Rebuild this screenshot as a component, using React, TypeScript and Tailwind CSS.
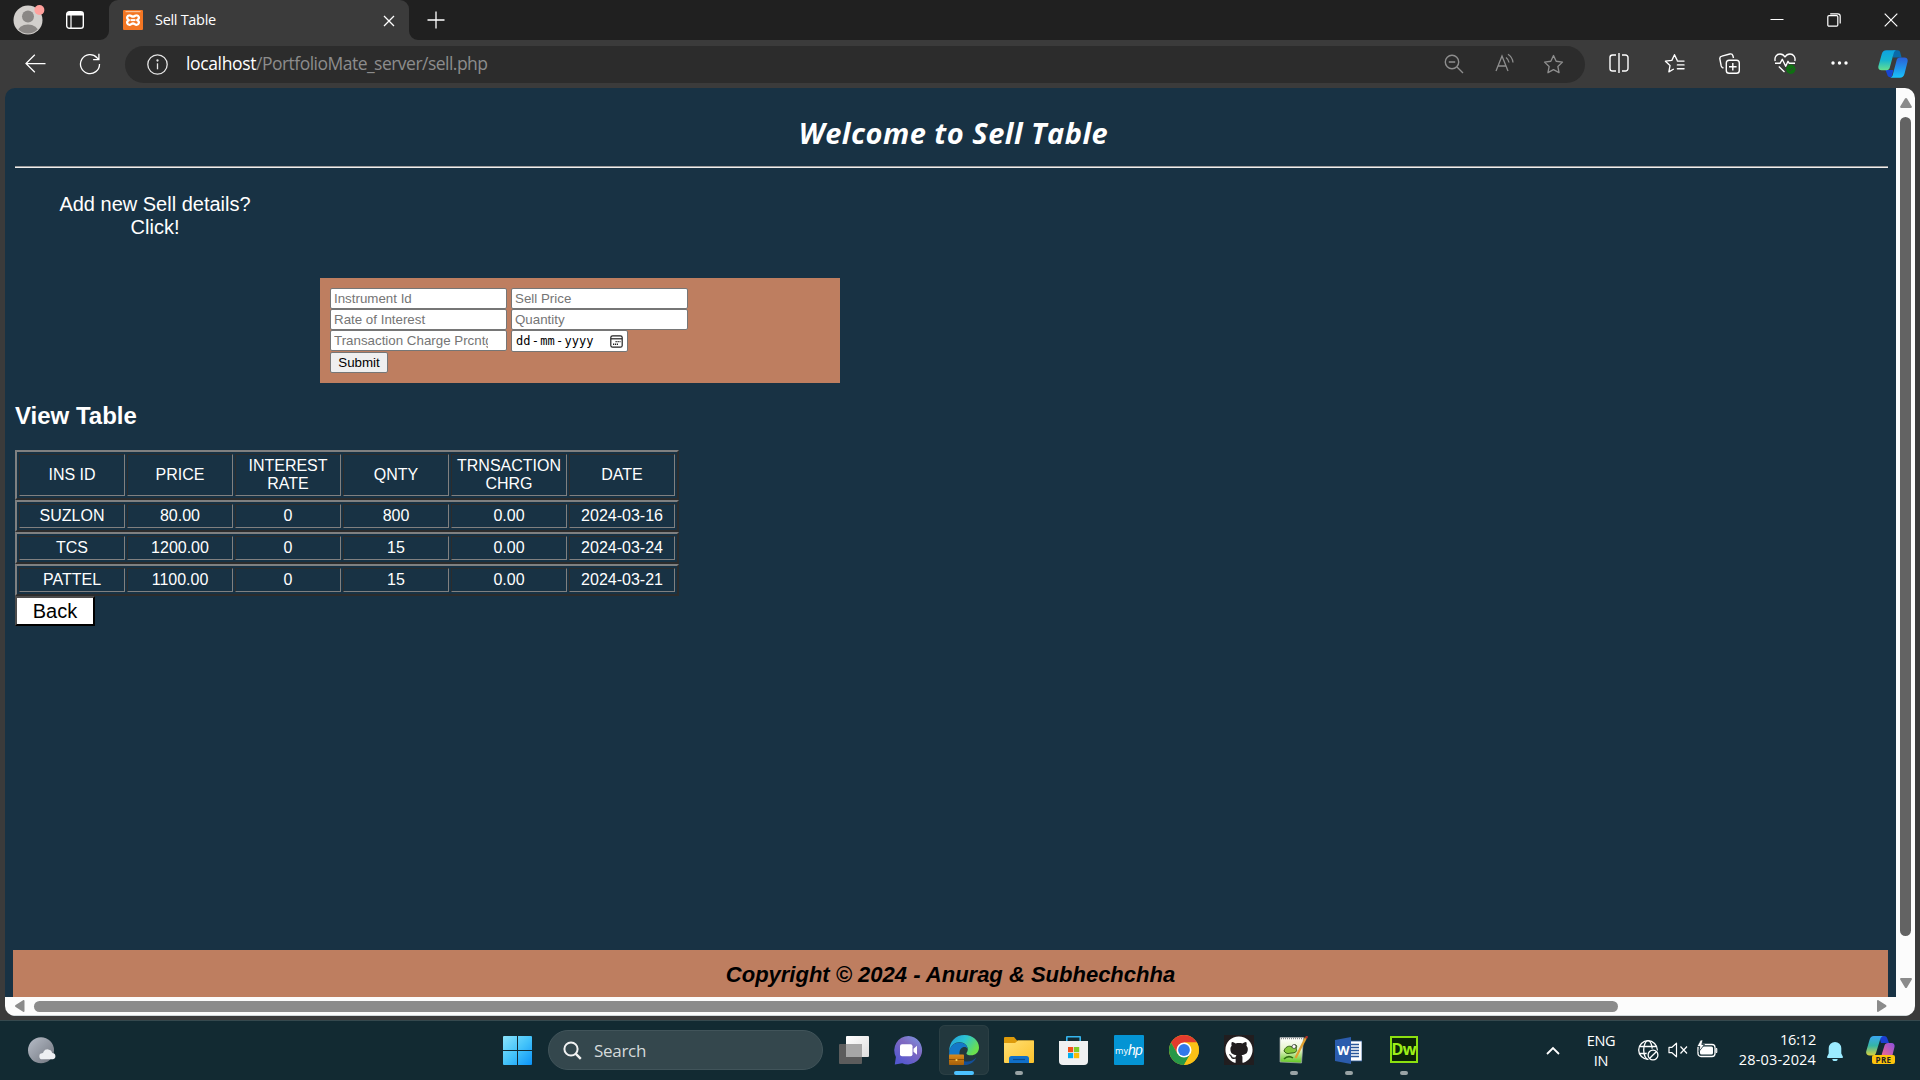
import React from "react";
import { FaGithub } from "react-icons/fa";

type P = { className?: string };

const XamppIcon = () => (
  <svg viewBox="0 0 20 20" className="h-5 w-5">
    <rect width="20" height="20" rx="1" fill="#f37623" />
    <rect x="2.500" y="1" width="15" height="1.200" fill="#f9c29a" />
    <path
      d="M6.500 5.300a2.300 2.300 0 0 0-1 4.400c.5.200.5.600 0 .8a2.300 2.300 0 0 0 1 4.400c1.700 0 1.900-1.400 3.500-1.400s1.800 1.400 3.500 1.400a2.300 2.300 0 0 0 1-4.400c-.5-.2-.5-.6 0-.8a2.300 2.300 0 0 0-1-4.400c-1.700 0-1.900 1.400-3.500 1.400s-1.800-1.400-3.500-1.400z"
      fill="none"
      stroke="#fff"
      strokeWidth="2.300"
    />
    <path d="M7.500 10.100h5" stroke="#fff" strokeWidth="2" />
  </svg>
);

function TabBar() {
  return (
    <div className="flex h-10 bg-[#202020]">
      <div className="relative flex w-[109px] shrink-0 items-center">
        <svg viewBox="0 0 32 32" className="ml-[13px] mt-[-1px] h-8 w-8">
          <circle cx="15" cy="16" r="14.5" fill="#d2cfcc" />
          <clipPath id="av"><circle cx="15" cy="16" r="13.6" /></clipPath>
          <g clipPath="url(#av)" fill="#8a8785">
            <circle cx="15" cy="12.5" r="6" />
            <ellipse cx="15" cy="28" rx="10.5" ry="7.5" />
          </g>
          <circle cx="26.4" cy="6" r="5" fill="#ffa09c" />
        </svg>
        <svg viewBox="0 0 18 18" className="ml-[21px] h-[18px] w-[18px]">
          <rect x=".7" y=".7" width="16.6" height="16.6" rx="2.6" fill="none" stroke="#fff" strokeWidth="1.4" />
          <path d="M1 4.6V3a2 2 0 0 1 2-2h12a2 2 0 0 1 2 2v1.6z" fill="#fff" />
          <path d="M5 4v13" stroke="#fff" strokeWidth="1.2" />
        </svg>
      </div>
      <div className="relative flex h-10 w-[300px] shrink-0 items-center rounded-t-[9px] bg-[#3b3b3b] pl-[14px] pr-[14px]">
        <XamppIcon />
        <span className="ml-3 flex-1 text-[14.5px] tracking-[-0.3px] text-white">Sell Table</span>
        <svg viewBox="0 0 12 12" className="mt-px h-3 w-3"><path d="M1 1l10 10M11 1L1 11" stroke="#fff" strokeWidth="1.3" /></svg>
        <svg viewBox="0 0 9 9" className="absolute -left-[9px] bottom-0 h-[9px] w-[9px]"><path d="M9 0v9H0A9 9 0 0 0 9 0z" fill="#3b3b3b" /></svg>
        <svg viewBox="0 0 9 9" className="absolute -right-[9px] bottom-0 h-[9px] w-[9px]"><path d="M0 0v9h9A9 9 0 0 1 0 0z" fill="#3b3b3b" /></svg>
      </div>
      <svg viewBox="0 0 18 18" className="ml-[18px] mt-[10.5px] h-[18px] w-[18px]"><path d="M9 .5v17M.5 9h17" stroke="#fff" strokeWidth="1.3" /></svg>
      <div className="ml-auto flex items-center pr-[22px]">
        <svg viewBox="0 0 14 14" className="h-3.5 w-3.5"><path d="M.5 6.500h13" stroke="#fff" strokeWidth="1" /></svg>
        <svg viewBox="0 0 14 14" className="ml-[43px] h-3.5 w-3.5" fill="none" stroke="#fff" strokeWidth="1.2">
          <rect x=".8" y="2.600" width="10" height="10.600" rx="1.2" />
          <path d="M3.2 .8h7.6a2.4 2.4 0 0 1 2.4 2.4v7.4" />
        </svg>
        <svg viewBox="0 0 14 14" className="ml-[43px] h-3.5 w-3.5"><path d="M.7 .7l12.6 12.6M13.3 .7L.7 13.3" stroke="#fff" strokeWidth="1.2" /></svg>
      </div>
    </div>
  );
}

const Slot = ({ children, className = "" }: { children: React.ReactNode; className?: string }) => (
  <div className={"flex h-full shrink-0 items-center justify-center " + className}>{children}</div>
);

const starPath = "M11 1.6l2.8 6 6.6.9-4.8 4.6 1.2 6.5-5.8-3.2-5.8 3.2 1.2-6.5L1.6 8.5l6.6-.9z";

function Copilot({ className }: P) {
  return (
    <svg viewBox="0 0 30 28" className={className}>
      <defs>
        <linearGradient id="c1" x1="0" y1="0" x2="0" y2="1"><stop offset="0" stopColor="#0ea2e0" /><stop offset=".5" stopColor="#17b5cf" /><stop offset="1" stopColor="#66e08f" /></linearGradient>
        <linearGradient id="c2" x1="0" y1="0" x2="0" y2="1"><stop offset="0" stopColor="#2a5fd8" /><stop offset="1" stopColor="#19c2fb" /></linearGradient>
      </defs>
      <path d="M15 .3h4.5c1.600 0 2.300.8 2.800 2.400L23.600 7.500H15z" fill="#0a6aa8" />
      <path d="M7.500 20h8l-2 7.300h-1.200c-1.700 0-2.600-1-3.100-2.800z" fill="#1746d1" />
      <path d="M8.500 .3h10c-1.500.3-2.300 1.300-2.800 3L11.800 17.500c-.5 1.800-1.500 2.700-3.300 2.700H3.600C1 20.200-.2 18.500.5 15.800L3.700 4.300C4.400 1.600 5.900.3 8.500.3z" fill="url(#c1)" />
      <path d="M21.800 27.700H12c1.500-.3 2.300-1.300 2.800-3l3.800-14.500c.5-1.800 1.500-2.700 3.300-2.700h4.500c2.600 0 3.800 1.800 3.100 4.500l-3 11.700c-.7 2.700-2.100 4-4.700 4z" fill="url(#c2)" />
    </svg>
  );
}

function Toolbar() {
  return (
    <div className="flex h-12 items-center bg-[#3b3b3b] pb-[2px]">
      <svg viewBox="0 0 21 19" className="ml-[24.5px] h-[19px] w-[21px] shrink-0" fill="none" stroke="#fff" strokeWidth="1.25"><path d="M20.500 9.500H1M9.800 .8L1 9.500l8.800 8.700" /></svg>
      <svg viewBox="0 0 22 22" className="ml-[33.5px] mt-px h-[22px] w-[22px] shrink-0" fill="none" stroke="#fff" strokeWidth="1.3"><path d="M20.500 11A9.500 9.500 0 1 1 18 4.700L19.800 6.500M19.900 .8v5.800h-5.800" /></svg>
      <div className="ml-[24px] mt-[2px] flex h-[37px] w-[1460px] shrink-0 items-center rounded-full bg-[#2c2c2c] pl-[22px]">
        <svg viewBox="0 0 21 21" className="h-[21px] w-[21px]" fill="none" stroke="#e6e6e6" strokeWidth="1.3"><circle cx="10.500" cy="10.500" r="9.700" /><path d="M10.500 9.300v6" /><circle cx="10.500" cy="6.500" r=".6" fill="#e6e6e6" stroke="none" /><circle cx="10.500" cy="6.500" r=".5" /></svg>
        <span className="ml-[18px] mt-[-2px] flex-1 whitespace-nowrap text-[17.5px] tracking-[-0.52px] text-[#8c8c8c]"><span className="tracking-[-0.36px] text-white">localhost</span>/PortfolioMate_server/sell.php</span>
        <Slot className="w-[50px]"><svg viewBox="0 0 20 20" className="ml-[2px] h-5 w-5" fill="none" stroke="#8e8e8e" strokeWidth="1.400"><circle cx="8" cy="8" r="6.700" /><path d="M13 13l6 6M4.800 8h6.400" /></svg></Slot>
        <Slot className="w-[50px]"><svg viewBox="0 0 20 20" className="mb-[2px] ml-[4px] h-5 w-5" fill="none" stroke="#8e8e8e" strokeWidth="1.300"><path d="M1 18L7 3l6 15M3 13h8M11 4.500a8 8 0 0 1 3 5M13 1.200a11 11 0 0 1 5 8.300" /></svg></Slot>
        <Slot className="mr-[7px] w-[50px]"><svg viewBox="0 0 22 22" className="h-[21px] w-[21px]" fill="none" stroke="#8e8e8e" strokeWidth="1.400" strokeLinejoin="round"><path d={starPath} /></svg></Slot>
      </div>
      <Slot className="ml-[7px] w-[54px]">
        <svg viewBox="0 0 20 20" className="h-5 w-5" fill="none" stroke="#fff" strokeWidth="1.400"><path d="M7 2H3.600A2.600 2.600 0 0 0 1 4.600v10.800A2.600 2.600 0 0 0 3.600 18H7M13 2h3.400A2.600 2.600 0 0 1 19 4.600v10.800a2.600 2.600 0 0 1-2.600 2.600H13M10 0v20" /></svg>
      </Slot>
      <Slot className="w-[56px]">
        <svg viewBox="0 0 22 22" className="h-[21px] w-[21px]" fill="none" stroke="#fff" strokeWidth="1.400" strokeLinejoin="round" strokeLinecap="round"><path d="M13.700 7.500L11 1.800 8.200 7.700 1.500 8.600l4.800 4.600-1.200 6.500 4.700-2.700M14 8.500h7M14 12.500h7M14 16.500h7" /></svg>
      </Slot>
      <Slot className="w-[55px]">
        <svg viewBox="0 0 21 21" className="h-[21px] w-[21px]" fill="none" stroke="#fff" strokeWidth="1.400"><rect x="7.300" y="7.300" width="13" height="13" rx="2.800" /><path d="M13.800 10v7.600M10 13.800h7.600M4.500 15l-1-.4a2.600 2.600 0 0 1-1.300-1.700L.9 6.100a2.600 2.600 0 0 1 2-3L10.800 1a2.600 2.600 0 0 1 3.100 1.800l.6 2.200" /></svg>
      </Slot>
      <Slot className="w-[55px]">
        <svg viewBox="0 0 22 22" className="h-[22px] w-[22px]" fill="none" stroke="#fff" strokeWidth="1.400" strokeLinejoin="round">
          <path d="M1.200 9C.2 5.500 2.500 2 6 2c2.300 0 4 1.300 5 3 1-1.700 2.700-3 5-3 3.500 0 5.800 3.500 4.800 7M1 11.300h5l2.300-4 3.400 7 2.300-5 1.300 2H21M4.800 14.500l5.700 5.400" />
          <circle cx="16.800" cy="17.200" r="4.700" fill="#0f7012" stroke="none" /><path d="M14.600 17.300l1.500 1.500 2.900-2.900" stroke="#3b3b3b" strokeWidth="1" />
        </svg>
      </Slot>
      <Slot className="w-[55px]">
        <svg viewBox="0 0 17 4" className="h-1 w-[17px]" fill="#fff"><circle cx="2" cy="2" r="1.700" /><circle cx="8.500" cy="2" r="1.700" /><circle cx="15" cy="2" r="1.700" /></svg>
      </Slot>
      <Slot className="w-[51px]"><Copilot className="mt-[1px] h-7 w-[30px]" /></Slot>
    </div>
  );
}

const Field = ({ text }: { text: string }) => (
  <div className="h-[21px] w-[176.5px] rounded-[2px] border border-[#767676] bg-white px-[3px]">
    <div className="w-[154px] overflow-hidden whitespace-nowrap text-[13.333px] leading-[19px] text-[#757575]">{text}</div>
  </div>
);

function SellForm() {
  return (
    <form className="ml-[315px] mt-[39px] h-[105px] w-[520px] bg-[#be7e60] pl-[10px] pt-[10px]">
      <div className="grid w-max grid-cols-[177px_177px] gap-x-[4px]">
        <Field text="Instrument Id" />
        <Field text="Sell Price" />
        <Field text="Rate of Interest" />
        <Field text="Quantity" />
        <Field text="Transaction Charge Prcntge" />
        <div className="flex h-[22px] w-[117px] items-center justify-between rounded-[2px] border border-[#767676] bg-white pl-[4px] pr-[4px]">
          <span className="whitespace-pre text-[12px] text-black [font-family:'DejaVu_Sans_Mono',monospace]"><span>dd</span><span className="mx-[1.3px]">-</span><span>mm</span><span className="mx-[1.3px]">-</span><span>yyyy</span></span>
          <svg viewBox="0 0 13 13" className="h-[13px] w-[13px]" fill="none" stroke="#222" strokeWidth="1.200"><rect x=".8" y=".8" width="11.400" height="11.400" rx="1.800" /><path d="M1 3.800h11" /><path d="M5.500 6.600h5M3 9.200h5" strokeWidth="1.400" strokeDasharray="1.300 .7" /></svg>
        </div>
      </div>
      <button type="button" className="block h-[21px] w-[58px] rounded-[2px] border border-[#767676] bg-[#efefef] text-center text-[13.333px] leading-[19px] text-black">Submit</button>
    </form>
  );
}

const rows: string[][] = [
  ["INS ID", "PRICE", "INTEREST RATE", "QNTY", "TRNSACTION CHRG", "DATE"],
  ["SUZLON", "80.00", "0", "800", "0.00", "2024-03-16"],
  ["TCS", "1200.00", "0", "15", "0.00", "2024-03-24"],
  ["PATTEL", "1100.00", "0", "15", "0.00", "2024-03-21"],
];

function SellTable() {
  return (
    <div className="flex flex-col">
      {rows.map((r, i) => (
        <div
          key={i}
          className={
            "grid w-[664px] grid-cols-[106px_106px_106px_106px_116px_106px] gap-[2px] border-2 border-b-[#2c2c2c] border-l-[#808080] border-r-[#2c2c2c] border-t-[#808080] p-[2px] " +
            (i === 0 ? "h-[50px]" : "h-8")
          }
        >
          {r.map((c, j) => (
            <div
              key={j}
              className="flex items-center justify-center border border-b-[#808080] border-l-[#2c2c2c] border-r-[#808080] border-t-[#2c2c2c] text-center text-[16px] leading-[18px] text-white"
            >
              {c}
            </div>
          ))}
        </div>
      ))}
    </div>
  );
}

function Page() {
  return (
    <div className="flex h-[909px] w-[1891px] flex-col bg-[#183244] text-white [font-family:'Liberation_Sans',Arial,sans-serif]">
      <h1 className="ml-[12px] mt-[21px] h-[47px] w-[1873px] text-center text-[29px] font-bold italic leading-[47px] tracking-[0.5px] [font-family:'Open_Sans',sans-serif]">Welcome to Sell Table</h1>
      <div className="ml-[10px] mt-[10px] h-[2px] w-[1873px] border-b border-t border-b-[#eeeeee] border-t-[#9a9a9a]" />
      <p className="ml-[50px] mt-[25px] w-[200px] text-center text-[20px] leading-[23px]">Add new Sell details?<br />Click!</p>
      <SellForm />
      <h2 className="ml-[10px] mt-[19px] text-[24px] font-bold leading-[28px]">View Table</h2>
      <div className="ml-[10px] mt-[20px]">
        <SellTable />
        <button type="button" className="block h-[30px] w-[80px] border-2 border-b-black border-l-[#4c4c4c] border-r-black border-t-[#4c4c4c] bg-white text-center text-[20px] leading-[26px] text-black">Back</button>
      </div>
      <footer className="ml-2 mt-auto h-[47px] w-[1875px] bg-[#be7e60] text-center text-[22px] font-bold italic leading-[49px] text-black">Copyright © 2024 - Anurag &amp; Subhechchha</footer>
    </div>
  );
}

function BrowserBody() {
  return (
    <div className="h-[932px] bg-[#3b3b3b] pl-[5px]">
      <div className="h-[928px] w-[1910px] overflow-hidden rounded-[10px]">
        <div className="flex">
          <Page />
          <div className="flex w-[19px] flex-col items-center bg-[#fcfcfc]">
            <svg viewBox="0 0 12 10" className="mt-[10px] h-[10px] w-3" fill="#8b8b8b"><path d="M6 0c.5 0 .8.200 1 .6l4.800 8c.3.700 0 1.400-.8 1.400H1c-.8 0-1.100-.7-.8-1.400l4.800-8C5.200.2 5.500 0 6 0z" /></svg>
            <div className="mt-[9px] h-[819px] w-[11px] rounded-full bg-[#636363]" />
            <svg viewBox="0 0 12 10" className="mt-[42px] h-[10px] w-3" fill="#8b8b8b"><path d="M6 10c.5 0 .8-.2 1-.6l4.800-8C12.100.7 11.800 0 11 0H1C.2 0-.1.700.2 1.400l4.800 8c.2.400.5.600 1 .6z" /></svg>
          </div>
        </div>
        <div className="flex h-[19px] items-center border-b border-[#d0d8da] bg-[#fcfcfc]">
          <svg viewBox="0 0 10 12" className="ml-[10px] h-3 w-[10px]" fill="#8b8b8b"><path d="M0 6c0-.5.200-.8.600-1l7.500-4.700C8.800-.1 9.500.2 9.500 1v10c0 .8-.7 1.100-1.400.7L.6 7C.2 6.800 0 6.500 0 6z" /></svg>
          <div className="ml-[9px] h-[11px] w-[1584px] rounded-full bg-[#8b8b8b]" />
          <svg viewBox="0 0 10 12" className="ml-[259px] h-3 w-[10px]" fill="#8b8b8b"><path d="M9.500 6c0-.5-.2-.8-.6-1L1.400.3C.7-.1 0 .2 0 1v10c0 .8.700 1.100 1.400.7L8.900 7c.4-.2.600-.5.600-1z" /></svg>
        </div>
      </div>
    </div>
  );
}

const App55 = ({ children, dot = false, active = false }: { children: React.ReactNode; dot?: boolean; active?: boolean }) => (
  <div className="flex h-full w-[55px] shrink-0 items-center justify-center">
    <div className={"relative flex h-[50px] w-[50px] items-center justify-center rounded-[6px] " + (active ? "bg-[#22373d] ring-1 ring-inset ring-[#2b3f44]" : "")}>
      {children}
      {active && <div className="absolute bottom-0 left-[15px] h-1 w-5 rounded-full bg-[#4cc2ff]" />}
      {dot && <div className="absolute bottom-0 left-[21px] h-1 w-2 rounded-full bg-[#99a3a5]" />}
    </div>
  </div>
);

function Taskbar() {
  return (
    <div className="flex h-[60px] items-center border-t border-[#36494e] bg-[#122a32] pb-[1px] text-white">
      <svg viewBox="0 0 28 27" className="ml-7 h-[27px] w-7 shrink-0">
        <defs><linearGradient id="moon" x1="0" y1="0" x2="1" y2="1"><stop offset="0" stopColor="#b7bdc8" /><stop offset="1" stopColor="#70757e" /></linearGradient></defs>
        <circle cx="13" cy="13.200" r="13" fill="url(#moon)" />
        <path d="M14.500 22.300a3 3 0 0 1-.3-6c.8-.1 1-.5 1.300-1.500a4.700 4.700 0 0 1 8.700 1.200 3.200 3.200 0 0 1 .8 6.300z" fill="#eef0f3" />
      </svg>
      <svg viewBox="0 0 29 29" className="ml-[447px] h-[29px] w-[29px] shrink-0">
        <defs><linearGradient id="win" x1="0" y1="0" x2="1" y2="1"><stop offset="0" stopColor="#8ae3fb" /><stop offset=".5" stopColor="#45c4fa" /><stop offset="1" stopColor="#0b93f8" /></linearGradient></defs>
        <path d="M0 1a1 1 0 0 1 1-1h13v14H0zM15 0h13a1 1 0 0 1 1 1v13H15zM0 15h14v14H1a1 1 0 0 1-1-1zM15 15h14v13a1 1 0 0 1-1 1H15z" fill="url(#win)" />
      </svg>
      <div className="ml-4 flex h-10 w-[275px] shrink-0 items-center rounded-full border border-[#41545a] bg-[#34474d] pl-[14px]">
        <svg viewBox="0 0 19 19" className="h-[19px] w-[19px]" fill="none" stroke="#f2f2f2" strokeWidth="2"><circle cx="8" cy="8" r="6.600" /><path d="M12.600 12.600l5.200 5.200" strokeWidth="2.400" /></svg>
        <span className="ml-3 mt-[2px] text-[17px] tracking-[-0.3px] text-[#d5dadb]">Search</span>
      </div>
      <div className="ml-[3px] flex h-full items-center">
        <App55>
          <svg viewBox="0 0 30 28" className="h-7 w-[30px]"><defs><linearGradient id="tv" x1="0" y1="0" x2="1" y2="1"><stop offset="0" stopColor="#fff" /><stop offset="1" stopColor="#dedede" /></linearGradient></defs><rect x="7" y="0" width="23" height="21" rx="1" fill="url(#tv)" /><rect x="0" y="8" width="23" height="20" rx="1" fill="#5c5c5c" /><rect x="7" y="8" width="16" height="13" fill="#a6a6a6" /></svg>
        </App55>
        <App55>
          <svg viewBox="0 0 29 29" className="h-[29px] w-[29px]"><defs><linearGradient id="ch" x1="1" y1="0" x2=".3" y2="1"><stop offset="0" stopColor="#7a9be8" /><stop offset=".45" stopColor="#7f69c0" /><stop offset="1" stopColor="#5558d0" /></linearGradient></defs><path d="M14.500 0a14.200 14.200 0 1 1-6.300 27.200L.8 28.500 1.900 21A14.300 14.300 0 0 1 14.500 0z" fill="url(#ch)" /><rect x="6" y="8.300" width="12.500" height="12" rx="2" fill="#fff" /><path d="M19.500 12.800l3.500-3v9l-3.500-3z" fill="#fff" /></svg>
        </App55>
        <App55 active>
          <svg viewBox="0 0 30 30" className="h-[30px] w-[30px]">
            <defs>
              <linearGradient id="e1" x1="0" y1="0" x2="1" y2=".5"><stop offset="0" stopColor="#2299dd" /><stop offset=".5" stopColor="#2cc3d2" /><stop offset="1" stopColor="#6be04e" /></linearGradient>
              <linearGradient id="e3" x1="0" y1="0" x2="0" y2="1"><stop offset="0" stopColor="#d98a1b" /><stop offset="1" stopColor="#a55f0a" /></linearGradient>
            </defs>
            <path d="M.2 17C0 6 7 0 15.500 0 24 0 30 6 30 12.500c0 5-3.800 7.800-8 7.800-3 0-4.600-1.100-4.600-2.100 0-.8 1.400-1.400 1.400-4 0-3.500-3.300-7-8.300-7C5.500 7.200 1.500 10.500.2 17z" fill="url(#e1)" />
            <path d="M.1 18C.3 11 5.500 7.400 10.500 7.400c5 0 8.100 3.400 8.100 6.600-1-2-3-2.300-4.600-1.700-3 1-3.800 4.200-3.500 7.700H.1z" fill="#1478c8" />
            <path d="M10.500 20c.5 3 2.500 6 6 6.500 4.300.6 8.500-1.500 10.800-4.300C25.500 27 21 30 15.500 30h-1z" fill="#134f99" />
            <rect x="0" y="19.500" width="15" height="10.500" rx=".8" fill="url(#e3)" /><path d="M0 24.500h15" stroke="#7b4304" strokeWidth=".8" /><circle cx="7.500" cy="25" r="1.100" fill="#ffd45c" />
          </svg>
        </App55>
        <App55 dot>
          <svg viewBox="0 0 30 27" className="h-[27px] w-[30px]"><path d="M0 1a1 1 0 0 1 1-1h9l3 3.500H30V8H0z" fill="#dd9a0a" /><defs><linearGradient id="fo" x1="0" y1="0" x2="1" y2="1"><stop offset="0" stopColor="#ffdf73" /><stop offset="1" stopColor="#fcc22c" /></linearGradient></defs><path d="M0 6h11l3-2.500h15a1 1 0 0 1 1 1V25a1 1 0 0 1-1 1H1a1 1 0 0 1-1-1z" fill="url(#fo)" /><path d="M5 26v-4.500a2.500 2.500 0 0 1 2.500-2.500h15a2.500 2.500 0 0 1 2.500 2.500V26z" fill="#1070c9" /><path d="M9 22.500h12" stroke="#0a4a8c" strokeWidth="1.200" /></svg>
        </App55>
        <App55>
          <svg viewBox="0 0 29 29" className="h-[29px] w-[29px]"><path d="M7.800 6V1.200a.6.600 0 0 1 .6-.6h12.200a.6.600 0 0 1 .6.600V6" fill="none" stroke="#35b5ee" strokeWidth="1.600" /><path d="M0 5h29v20a4 4 0 0 1-4 4H4a4 4 0 0 1-4-4z" fill="#f0f1f2" /><rect x="9" y="11" width="5.200" height="5.200" fill="#f1511b" /><rect x="15" y="11" width="5.200" height="5.200" fill="#80cc28" /><rect x="9" y="17" width="5.200" height="5.200" fill="#00adef" /><rect x="15" y="17" width="5.200" height="5.200" fill="#fbbc09" /></svg>
        </App55>
        <App55>
          <div className="flex h-[30px] w-[30px] items-center justify-center rounded-[1px] bg-[#0494d4] text-white"><span className="text-[9px] leading-none">my</span><span className="text-[14px] italic leading-none tracking-[-0.8px] [font-family:'Liberation_Sans',sans-serif]">hp</span></div>
        </App55>
        <App55>
          <svg viewBox="-15 -15 30 30" className="h-[30px] w-[30px]">
            <circle r="15" fill="#fbbf16" />
            <path d="M-12.990 -7.500A15 15 0 0 1 12.990 -7.500L0 -7.500L-6.500 3.750z" fill="#e33b2e" />
            <path d="M-12.990 -7.500A15 15 0 0 0 0 15L6.500 3.750L-6.500 3.750z" fill="#279847" />
            <path d="M0 15A15 15 0 0 0 12.990 -7.500H0L6.500 3.750z" fill="#fbc116" />
            <circle r="7.500" fill="#fff" /><circle r="5.900" fill="#3178ea" />
          </svg>
        </App55>
        <App55>
          <div className="flex h-[30px] w-[30px] items-center justify-center bg-[#211d1f]"><FaGithub className="h-[28px] w-[28px] text-white" /></div>
        </App55>
        <App55 dot>
          <svg viewBox="0 0 29 28" className="h-7 w-[29px]"><defs><linearGradient id="np" x1="0" y1="0" x2="0" y2="1"><stop offset="0" stopColor="#fff" /><stop offset=".5" stopColor="#e4f4c8" /><stop offset="1" stopColor="#5cc61c" /></linearGradient></defs><path d="M1 1.500h23.500L22.500 27l-21.500-1z" fill="url(#np)" stroke="#a9aeb0" strokeWidth=".7" /><path d="M2 2.500h21" stroke="#8b8f90" strokeWidth="1.500" strokeDasharray="1 1" /><path d="M5 15c1-4 5-6 8-4 3-4 6-2 4 2 2 2-1 4-4 4s-5 2-8-2z" fill="#86c93c" stroke="#2d5b11" strokeWidth="1" /><circle cx="15" cy="10.500" r="2" fill="#fff" stroke="#333" strokeWidth=".7" /><path d="M5 23c3-3 6-3 9-1" stroke="#2f6b12" strokeWidth="1.500" fill="none" /><path d="M27 1.500L16.500 22" stroke="#e0a030" strokeWidth="2.300" /><path d="M28.200 0l-1.300 2.500" stroke="#a8302a" strokeWidth="2.300" /></svg>
        </App55>
        <App55 dot>
          <div className="relative h-[27px] w-[27px]">
            <svg viewBox="0 0 27 27" className="h-[27px] w-[27px]"><rect x="13" y="4" width="14" height="20" fill="#fff" stroke="#2b579a" strokeWidth=".8" /><path d="M15 7.500h9M15 10.500h9M15 13.500h9M15 16.500h9M15 19.500h9" stroke="#2b579a" strokeWidth="1.300" /><path d="M0 3l16-3v27L0 24z" fill="#2b5cad" /></svg>
            <span className="absolute left-[2px] top-[5px] text-[13px] font-bold leading-[17px] text-white">W</span>
          </div>
        </App55>
        <App55 dot>
          <div className="mb-[2px] flex h-[27px] w-7 items-center justify-center border-2 border-[#8ce010] bg-[#0c2408] text-[16.5px] font-bold leading-none tracking-[-1px] text-[#9cf018]">Dw</div>
        </App55>
      </div>
      <div className="ml-auto flex h-full items-center pr-[25px]">
        <svg viewBox="0 0 14 9" className="h-[9px] w-[14px]" fill="none" stroke="#fff" strokeWidth="1.800"><path d="M1 8l6-6 6 6" /></svg>
        <div className="ml-[20px] mt-[2px] w-[42px] text-center text-[14.500px] leading-[20px] tracking-[-0.3px]">ENG<br />IN</div>
        <svg viewBox="0 0 21 21" className="ml-[16px] h-[21px] w-[21px]" fill="none" stroke="#fff" strokeWidth="1.300"><circle cx="10" cy="10" r="9.300" /><ellipse cx="10" cy="10" rx="4.300" ry="9.300" /><path d="M1.500 6.500h17M1.500 13.500h17" /><circle cx="15" cy="15" r="5.800" fill="#122a32" stroke="#122a32" /><circle cx="15" cy="15" r="4.900" /><path d="M11.700 18.300l6.600-6.600" /></svg>
        <svg viewBox="0 0 20 16" className="ml-[9px] h-4 w-5" fill="none" stroke="#fff" strokeWidth="1.200"><path d="M1 5.300h3L8.500 1.200v13.600L4 10.700H1z" strokeLinejoin="round" /><path d="M12.500 4.500l6.500 7M19 4.500l-6.500 7" /></svg>
        <svg viewBox="0 0 22 18" className="mb-[2px] ml-[8px] h-[18px] w-[22px]"><rect x="2" y="4.500" width="17" height="12" rx="3" fill="none" stroke="#fff" strokeWidth="1.300" /><rect x="4" y="6.500" width="13" height="8" rx="1.500" fill="#fff" /><path d="M20 8.500h.8v4H20z" stroke="#fff" strokeWidth="1" /><path d="M4.500 0L1 6.500h2.800L3 11.500 8.500 4.500H5.800L7 0z" fill="#fff" stroke="#122a32" strokeWidth=".8" /></svg>
        <div className="ml-[16px] w-[82px] whitespace-nowrap text-right text-[14.500px] leading-[20px]"><span className="tracking-[-0.2px]">16:12</span><br /><span className="tracking-[0.150px]">28-03-2024</span></div>
        <svg viewBox="0 0 16 19" className="ml-[11px] mt-[2px] h-[19px] w-4" fill="#9bebff"><path d="M8 0a6.300 6.300 0 0 1 6.300 6.300v5.200l1.600 3.300c.2.600-.1 1.200-.8 1.200H.9c-.7 0-1-.6-.8-1.200l1.600-3.300V6.300A6.300 6.300 0 0 1 8 0zM5.300 17h5.400a2.700 2.200 0 0 1-5.400 0z" /></svg>
        <div className="relative ml-[23px] h-[28px] w-[29px]">
          <svg viewBox="0 0 29 21" className="h-[21px] w-[29px]"><defs><linearGradient id="p1" x1="0" y1="0" x2="0" y2="1"><stop offset="0" stopColor="#3aa7f2" /><stop offset=".5" stopColor="#35b5a5" /><stop offset="1" stopColor="#d9d23a" /></linearGradient><linearGradient id="p2" x1="1" y1="0" x2="0" y2="1"><stop offset="0" stopColor="#8a4fe0" /><stop offset="1" stopColor="#f96a8a" /></linearGradient></defs><path d="M13 0h5c2 0 3 1 3.500 3L23 7h-8z" fill="#1b3fd0" /><path d="M8 0h9c-1.500.500-2.200 1.500-2.700 3L10 17c-.5 1.700-1.500 2.500-3.300 2.500H3.500C.8 19.500-.4 17.500.3 15L3.500 4C4.200 1.300 5.500 0 8 0z" fill="url(#p1)" /><path d="M22 7h3.500c2.400 0 3.500 1.800 3 4l-2.500 10H15l3.500-11.500C19 8 20 7 22 7z" fill="url(#p2)" /></svg>
          <div className="absolute bottom-0 left-[6px] h-[9px] w-[23px] rounded-[2px] bg-[#fdc40c] text-center text-[8px] font-bold leading-[9px] tracking-[0.4px] text-[#222]">PRE</div>
        </div>
      </div>
    </div>
  );
}

export default function App() {
  return (
    <div className="flex h-[1080px] w-[1920px] flex-col overflow-hidden bg-[#3b3b3b] [font-family:'Open_Sans','Noto_Sans',sans-serif]">
      <TabBar />
      <Toolbar />
      <BrowserBody />
      <Taskbar />
    </div>
  );
}
